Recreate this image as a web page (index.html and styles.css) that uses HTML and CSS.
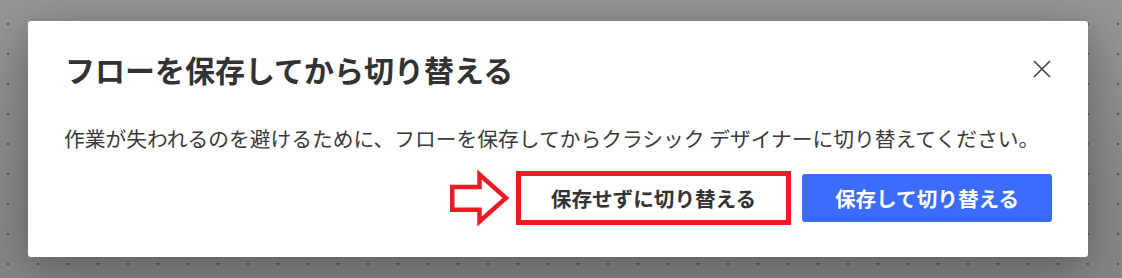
FILE: index.html
```html
<!DOCTYPE html>
<html lang="ja">
<head>
<meta charset="utf-8">
<title>フローを保存してから切り替える</title>
<link rel="stylesheet" href="styles.css">
</head>
<body>
<div class="backdrop">
  <div class="dialog" role="dialog">
    <div class="dialog-header">
      <h1 class="dialog-title">フローを保存してから切り替える</h1>
      <button class="close-btn" aria-label="閉じる">
        <svg width="18" height="18" viewBox="0 0 18 18"><path d="M1 1 L17 17 M17 1 L1 17" stroke="#404040" stroke-width="1.6" fill="none"/></svg>
      </button>
    </div>
    <p class="dialog-body">作業が失われるのを避けるために、フローを保存してからクラシック デザイナーに切り替えてください。</p>
    <div class="dialog-actions">
      <svg class="arrow" width="62" height="56" viewBox="0 0 62 56"><path d="M3.25 17 H30.5 V4.5 L57 28 L30.5 51.5 V39.75 H3.25 Z" fill="#fff" stroke="#ed1c24" stroke-width="4.5" stroke-linejoin="miter"/></svg>
      <div class="highlight">
        <button class="btn btn-secondary">保存せずに切り替える</button>
      </div>
      <button class="btn btn-primary">保存して切り替える</button>
    </div>
  </div>
</div>
</body>
</html>
```
FILE: styles.css
```css
html, body {
  margin: 0;
  padding: 0;
}
body {
  width: 1122px;
  height: 278px;
  overflow: hidden;
  font-family: "Noto Sans CJK JP", "Noto Sans", sans-serif;
}
.backdrop {
  width: 1122px;
  height: 278px;
  box-sizing: border-box;
  padding: 21px 0 0 28px;
  background-color: #8e8e8e;
  background-image:
    radial-gradient(circle at 15px 15px, rgba(70,70,70,0.75) 0, rgba(70,70,70,0.75) 1px, transparent 1.6px),
    linear-gradient(180deg, #969696 0%, #8a8a8a 60%, #858585 100%);
  background-size: 30px 30px, 100% 100%;
  background-position: -7px 9px, 0 0;
}
.dialog {
  width: 1060px;
  height: 236px;
  box-sizing: border-box;
  background: #fff;
  border-radius: 3px;
  padding: 28px 36px 36px 36px;
  box-shadow: 0 10px 45px rgba(0,0,0,0.32);
  display: flex;
  flex-direction: column;
}
.dialog-header {
  height: 40px;
  display: flex;
  align-items: center;
  justify-content: space-between;
}
.dialog-title {
  margin: 0;
  font-size: 30px;
  line-height: 40px;
  font-weight: 700;
  color: #323232;
  padding-left: 1px;
}
.close-btn {
  border: none;
  background: transparent;
  padding: 0;
  margin-right: 1px;
  width: 18px;
  height: 18px;
  display: flex;
  cursor: pointer;
}
.dialog-body {
  margin: 35px 0 0 0;
  font-size: 20.75px;
  line-height: 28px;
  color: #3a3a3a;
}
.dialog-actions {
  margin-top: 18px;
  display: flex;
  justify-content: flex-end;
  align-items: center;
}
.arrow {
  margin-right: 5px;
  display: block;
}
.highlight {
  border: 5px solid #ed1c24;
  width: 265px;
  height: 44px;
  display: flex;
}
.btn {
  font-family: "Noto Sans CJK JP", "Noto Sans", sans-serif;
  font-size: 20.6px;
  font-weight: 700;
  border: none;
  cursor: pointer;
  padding: 0;
}
.btn-secondary {
  width: 100%;
  height: 100%;
  background: #fff;
  color: #333;
}
.btn-primary {
  margin-left: 11px;
  width: 250px;
  height: 48px;
  border-radius: 3px;
  background: #3c6cfc;
  color: #fff;
}
```
